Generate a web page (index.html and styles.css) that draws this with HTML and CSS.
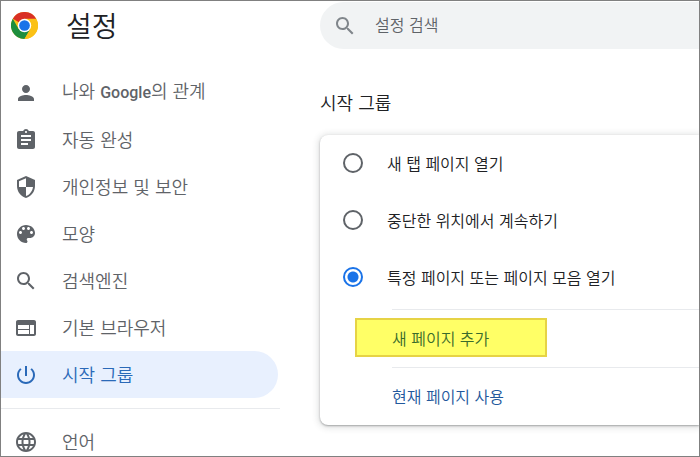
FILE: index.html
```html
<!DOCTYPE html>
<html lang="ko">
<head>
  <meta charset="UTF-8">
  <meta name="viewport" content="width=device-width, initial-scale=1.0">
  <title>설정</title>
  <link rel="stylesheet" href="styles.css">
</head>
<body>
  <aside class="sidebar">
    <header class="brand">
      <svg class="logo" viewBox="0 0 48 48" aria-hidden="true">
        <circle cx="24" cy="24" r="24" fill="#fbc116"/>
        <path d="M24 24 3.2 12A24 24 0 0 1 44.8 12Z" fill="#d93025"/>
        <path d="M3.2 12A24 24 0 0 0 24 48L34.4 30 13.6 30Z" fill="#1e8e3e"/>
        <path d="M24 12h20.8A24 24 0 0 1 24 48l10.4-18Z" fill="#fbc116"/>
        <circle cx="24" cy="24" r="12" fill="#fff"/>
        <circle cx="24" cy="24" r="9.5" fill="#1a73e8"/>
      </svg>
      <h1>설정</h1>
    </header>

    <nav class="menu">
      <a href="#people">
        <svg viewBox="0 0 24 24"><path d="M12 12c2.21 0 4-1.79 4-4s-1.79-4-4-4-4 1.79-4 4 1.79 4 4 4zm0 2c-2.67 0-8 1.34-8 4v2h16v-2c0-2.66-5.33-4-8-4z"/></svg>
        <span>나와 <b>Google</b>의 관계</span>
      </a>
      <a href="#autofill">
        <svg viewBox="0 0 24 24"><path d="M19 3h-4.18C14.4 1.84 13.3 1 12 1s-2.4.84-2.82 2H5c-1.1 0-2 .9-2 2v14c0 1.1.9 2 2 2h14c1.1 0 2-.9 2-2V5c0-1.1-.9-2-2-2zm-7 0c.55 0 1 .45 1 1s-.45 1-1 1-1-.45-1-1 .45-1 1-1zm2 14H7v-2h7v2zm3-4H7v-2h10v2zm0-4H7V7h10v2z"/></svg>
        <span>자동 완성</span>
      </a>
      <a href="#privacy">
        <svg viewBox="0 0 24 24"><path d="M12 1 3 5v6c0 5.55 3.84 10.74 9 12 5.16-1.26 9-6.45 9-12V5l-9-4zm0 10.99h7c-.53 4.12-3.28 7.79-7 8.94V12H5V6.3l7-3.11v8.8z"/></svg>
        <span>개인정보 및 보안</span>
      </a>
      <a href="#appearance">
        <svg viewBox="0 0 24 24"><path d="M12 3c-4.97 0-9 4.03-9 9s4.03 9 9 9c.83 0 1.5-.67 1.5-1.5 0-.39-.15-.74-.39-1.01-.23-.26-.38-.61-.38-.99 0-.83.67-1.5 1.5-1.5H16c2.76 0 5-2.24 5-5 0-4.42-4.03-8-9-8zm-5.5 9c-.83 0-1.5-.67-1.5-1.5S5.67 9 6.5 9 8 9.67 8 10.5 7.33 12 6.5 12zm3-4C8.67 8 8 7.33 8 6.5S8.67 5 9.5 5s1.5.67 1.5 1.5S10.33 8 9.5 8zm5 0c-.83 0-1.5-.67-1.5-1.5S13.67 5 14.5 5s1.5.67 1.5 1.5S15.33 8 14.5 8zm3 4c-.83 0-1.5-.67-1.5-1.5S16.67 9 17.5 9s1.5.67 1.5 1.5-.67 1.5-1.5 1.5z"/></svg>
        <span>모양</span>
      </a>
      <a href="#search">
        <svg viewBox="0 0 24 24"><path d="M15.5 14h-.79l-.28-.27C15.41 12.59 16 11.11 16 9.5 16 5.91 13.09 3 9.5 3S3 5.91 3 9.5 5.91 16 9.5 16c1.61 0 3.09-.59 4.23-1.57l.27.28v.79l5 4.99L20.49 19l-4.99-5zm-6 0C7.01 14 5 11.99 5 9.5S7.01 5 9.5 5 14 7.01 14 9.5 11.99 14 9.5 14z"/></svg>
        <span>검색엔진</span>
      </a>
      <a href="#browser">
        <svg viewBox="0 0 24 24"><path d="M20 4H4c-1.1 0-1.99.9-1.99 2L2 18c0 1.1.9 2 2 2h16c1.1 0 2-.9 2-2V6c0-1.1-.9-2-2-2zm-5 14H4v-4h11v4zm0-5H4V9h11v4zm5 5h-4V9h4v9z"/></svg>
        <span>기본 브라우저</span>
      </a>
      <a href="#startup" class="active">
        <svg viewBox="0 0 24 24"><path d="M13 3h-2v10h2V3zm4.83 2.17-1.42 1.42C17.99 7.86 19 9.81 19 12c0 3.87-3.13 7-7 7s-7-3.13-7-7c0-2.19 1.01-4.14 2.58-5.42L6.17 5.17C4.23 6.82 3 9.26 3 12c0 4.97 4.03 9 9 9s9-4.03 9-9c0-2.74-1.23-5.18-3.17-6.83z"/></svg>
        <span>시작 그룹</span>
      </a>
    </nav>
    <nav class="menu more">
      <a href="#languages">
        <svg viewBox="0 0 24 24"><path d="M11.99 2C6.47 2 2 6.48 2 12s4.47 10 9.99 10C17.52 22 22 17.52 22 12S17.52 2 11.99 2zm6.93 6h-2.95c-.32-1.25-.78-2.45-1.38-3.56 1.84.63 3.37 1.91 4.33 3.56zM12 4.04c.83 1.2 1.48 2.53 1.91 3.96h-3.82c.43-1.43 1.08-2.76 1.91-3.96zM4.26 14C4.1 13.36 4 12.69 4 12s.1-1.36.26-2h3.38c-.08.66-.14 1.32-.14 2s.06 1.34.14 2H4.26zm.82 2h2.95c.32 1.25.78 2.45 1.38 3.56-1.84-.63-3.37-1.9-4.33-3.56zm2.95-8H5.08c.96-1.66 2.49-2.93 4.33-3.56C8.81 5.55 8.35 6.75 8.03 8zM12 19.96c-.83-1.2-1.48-2.53-1.91-3.96h3.82c-.43 1.43-1.08 2.76-1.91 3.96zM14.34 14H9.66c-.09-.66-.16-1.32-.16-2s.07-1.35.16-2h4.68c.09.65.16 1.32.16 2s-.07 1.34-.16 2zm.25 5.56c.6-1.11 1.06-2.31 1.38-3.56h2.95c-.96 1.65-2.49 2.93-4.33 3.56zM16.36 14c.08-.66.14-1.32.14-2s-.06-1.34-.14-2h3.38c.16.64.26 1.31.26 2s-.1 1.36-.26 2h-3.38z"/></svg>
        <span>언어</span>
      </a>
    </nav>
  </aside>

  <main class="content">
    <label class="search">
      <svg viewBox="0 0 24 24" aria-hidden="true"><path d="M15.5 14h-.79l-.28-.27C15.41 12.59 16 11.11 16 9.5 16 5.91 13.09 3 9.5 3S3 5.91 3 9.5 5.91 16 9.5 16c1.61 0 3.09-.59 4.23-1.57l.27.28v.79l5 4.99L20.49 19l-4.99-5zm-6 0C7.01 14 5 11.99 5 9.5S7.01 5 9.5 5 14 7.01 14 9.5 11.99 14 9.5 14z"/></svg>
      <input type="search" placeholder="설정 검색" aria-label="설정 검색">
    </label>

    <h2>시작 그룹</h2>
    <section class="card">
      <label class="option"><input type="radio" name="startup"> 새 탭 페이지 열기</label>
      <label class="option"><input type="radio" name="startup"> 중단한 위치에서 계속하기</label>
      <label class="option"><input type="radio" name="startup" checked> 특정 페이지 또는 페이지 모음 열기</label>
      <div class="pages">
        <div class="page-row"><button type="button" class="highlight">새 페이지 추가</button></div>
        <div class="page-row"><button type="button">현재 페이지 사용</button></div>
      </div>
    </section>
  </main>
</body>
</html>
```
FILE: styles.css
```css
* {
  box-sizing: border-box;
}
body {
  margin: 0;
  height: 100vh;
  display: flex;
  overflow: hidden;
  border: 1px solid #808080;
  background: #fff;
  color: #202124;
  font-family: "Noto Sans CJK KR", sans-serif;
  font-size: 16px;
  font-weight: 350;
  line-height: 24px;
}
h1, h2 {
  margin: 0;
  font-weight: 350;
}
svg {
  flex: none;
  fill: currentColor;
}

/* sidebar */
.sidebar {
  flex: none;
  width: 279px;
}
.brand {
  display: flex;
  align-items: center;
  gap: 28px;
  height: 48px;
  margin-bottom: 20px;
  padding-left: 10px;
}
.logo {
  width: 27px;
  height: 27px;
}
h1 {
  font-size: 28px;
  line-height: 40px;
}
.menu a {
  display: flex;
  align-items: center;
  gap: 24px;
  height: 47px;
  margin-right: 2px;
  padding-left: 13px;
  border-radius: 0 24px 24px 0;
  color: #5f6368;
  font-size: 18px;
  text-decoration: none;
}
.menu svg {
  width: 24px;
  height: 24px;
}
.menu span {
  padding-bottom: 2px;
}
.menu b {
  font-family: Roboto, sans-serif;
  font-size: 16px;
  font-weight: 500;
}
.menu .active {
  background: #e8f0fe;
  color: #2a69b8;
}
.more {
  margin-top: 10px;
  padding-top: 9px;
  border-top: 1px solid #e8eaed;
}

/* content */
.content {
  flex: 1;
  padding-top: 1px;
  padding-left: 40px;
}
.search {
  display: flex;
  align-items: center;
  gap: 18px;
  height: 47px;
  padding-left: 13px;
  border-radius: 24px 0 0 24px;
  background: #f1f3f4;
  color: #80868b;
}
.search svg {
  width: 24px;
  height: 24px;
}
.search input {
  flex: 1;
  min-width: 0;
  padding: 0 0 4px;
  border: none;
  outline: none;
  background: transparent;
  font: inherit;
}
.search input::placeholder {
  color: #5f6368;
}
h2 {
  margin: 39px 0 19px;
  font-size: 18px;
  line-height: 28px;
}
.card {
  border-radius: 8px 0 0 8px;
  box-shadow: 0 1px 2px rgba(60,64,67,0.4), 0 1px 6px 2px rgba(60,64,67,0.15);
}
.option {
  display: flex;
  align-items: center;
  gap: 24px;
  height: 56px;
  margin-bottom: 1px;
  padding-left: 23px;
}
.option input {
  appearance: none;
  width: 20px;
  height: 20px;
  margin: 0;
  border: 2px solid #5f6368;
  border-radius: 50%;
}
.option input:checked {
  border-color: #1a73e8;
  background: radial-gradient(circle, #1a73e8 5px, transparent 6px);
}
.pages {
  margin-left: 72px;
  padding-top: 3px;
}
.page-row {
  display: flex;
  align-items: center;
  height: 58px;
  padding-bottom: 2px;
  border-top: 1px solid #e8eaed;
}
.page-row button {
  padding: 0;
  border: none;
  background: none;
  color: #22589c;
  font: inherit;
}
.page-row .highlight {
  height: 39px;
  margin-left: -37px;
  padding: 0 56px 0 35px;
  border: 2px solid #e6d345;
  background: #ffff66;
  color: #3a6b2c;
}
```
